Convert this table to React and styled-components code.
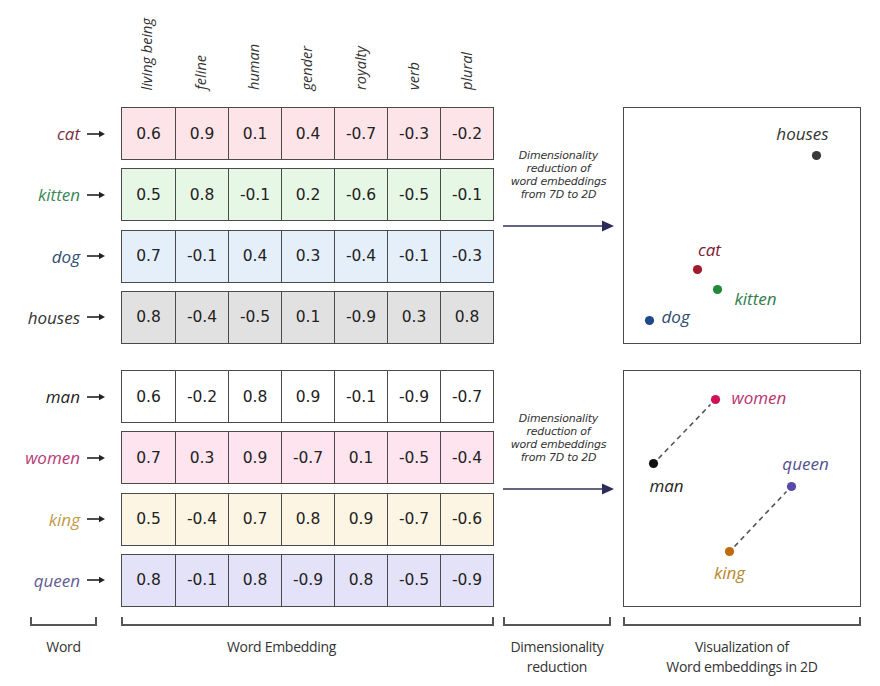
import React from "react";
import styled, { createGlobalStyle } from "styled-components";

const GlobalStyle = createGlobalStyle`
  html, body {
    margin: 0;
    padding: 0;
    background: #ffffff;
  }
  body {
    font-family: "Open Sans", "DejaVu Sans", sans-serif;
  }
`;

const COLS = "121px 373px 129px 238px";
const LINE = "#4a4a4a";

const features = ["living being", "feline", "human", "gender", "royalty", "verb", "plural"];

const groups = [
  {
    rows: [
      { word: "cat", color: "#7d2f45", bg: "#fde4e8", values: ["0.6", "0.9", "0.1", "0.4", "-0.7", "-0.3", "-0.2"] },
      { word: "kitten", color: "#3b8758", bg: "#e6f7e5", values: ["0.5", "0.8", "-0.1", "0.2", "-0.6", "-0.5", "-0.1"] },
      { word: "dog", color: "#2f4d72", bg: "#e4effa", values: ["0.7", "-0.1", "0.4", "0.3", "-0.4", "-0.1", "-0.3"] },
      { word: "houses", color: "#333333", bg: "#e1e1e1", values: ["0.8", "-0.4", "-0.5", "0.1", "-0.9", "0.3", "0.8"] },
    ],
    points: [
      { label: "houses", color: "#333333", dot: "#3a3a3a", x: 194, y: 49, tx: 180, ty: 33, anchor: "middle" },
      { label: "cat", color: "#7d2030", dot: "#a01b2b", x: 75, y: 163, tx: 87, ty: 149, anchor: "middle" },
      { label: "kitten", color: "#2f7d4c", dot: "#1f8a3a", x: 95, y: 183, tx: 112, ty: 198, anchor: "start" },
      { label: "dog", color: "#2d4a6e", dot: "#1f4a8a", x: 27, y: 214, tx: 39, ty: 216, anchor: "start" },
    ],
    links: [],
  },
  {
    rows: [
      { word: "man", color: "#1f1f1f", bg: "#ffffff", values: ["0.6", "-0.2", "0.8", "0.9", "-0.1", "-0.9", "-0.7"] },
      { word: "women", color: "#b63c77", bg: "#fde4ef", values: ["0.7", "0.3", "0.9", "-0.7", "0.1", "-0.5", "-0.4"] },
      { word: "king", color: "#c39a48", bg: "#fdf5e3", values: ["0.5", "-0.4", "0.7", "0.8", "0.9", "-0.7", "-0.6"] },
      { word: "queen", color: "#5f5d92", bg: "#e4e2f8", values: ["0.8", "-0.1", "0.8", "-0.9", "0.8", "-0.5", "-0.9"] },
    ],
    points: [
      { label: "women", color: "#b8336f", dot: "#d0105a", x: 93, y: 30, tx: 109, ty: 34, anchor: "start" },
      { label: "man", color: "#1f1f1f", dot: "#111111", x: 31, y: 94, tx: 44, ty: 122, anchor: "middle" },
      { label: "queen", color: "#55508e", dot: "#5a4aa8", x: 169, y: 117, tx: 183, ty: 100, anchor: "middle" },
      { label: "king", color: "#b8862e", dot: "#c06a10", x: 107, y: 182, tx: 107, ty: 209, anchor: "middle" },
    ],
    links: [
      [31, 94, 93, 30],
      [107, 182, 169, 117],
    ],
  },
];

const Page = styled.div`
  width: 880px;
  height: 686px;
  background: #ffffff;
  display: flex;
  flex-direction: column;
`;

const Header = styled.div`
  display: flex;
  height: 107px;
  flex: none;
`;

const HeaderSpacer = styled.div`
  width: 121px;
  flex: none;
`;

const HeaderCols = styled.div`
  width: 373px;
  display: grid;
  grid-template-columns: repeat(7, 1fr);
`;

const HeadCell = styled.div`
  display: flex;
  align-items: flex-end;
  justify-content: center;
  padding-bottom: 17px;
`;

const HeadText = styled.span`
  writing-mode: vertical-rl;
  transform: rotate(180deg);
  font-style: italic;
  font-size: 14.5px;
  line-height: 1;
  color: #333333;
  white-space: nowrap;
`;

const Section = styled.section`
  display: flex;
  height: 237px;
  flex: none;
  margin-top: ${(p) => p.$top}px;
`;

const Rows = styled.div`
  width: 494px;
  display: flex;
  flex-direction: column;
  justify-content: space-between;
`;

const Row = styled.div`
  display: flex;
  height: 53px;
`;

const WordLabel = styled.div`
  width: 121px;
  flex: none;
  box-sizing: border-box;
  padding-right: 16px;
  display: flex;
  align-items: center;
  justify-content: flex-end;
  gap: 7px;
  font-style: italic;
  font-size: 17px;
  color: ${(p) => p.$color};
`;

const Cells = styled.div`
  width: 373px;
  box-sizing: border-box;
  display: grid;
  grid-template-columns: repeat(7, 1fr);
  border: 1.5px solid ${LINE};
  background: ${(p) => p.$bg};
`;

const Cell = styled.div`
  display: flex;
  align-items: center;
  justify-content: center;
  font-family: "DejaVu Sans", sans-serif;
  font-size: 15.5px;
  color: #222222;
  & + & {
    border-left: 1.5px solid ${LINE};
  }
`;

const DimCol = styled.div`
  width: 129px;
  box-sizing: border-box;
  padding: 0 9px;
  display: grid;
  grid-template-rows: 1fr auto 1fr;
`;

const DimCaption = styled.div`
  align-self: end;
  margin-bottom: 18px;
  text-align: center;
  font-family: "DejaVu Sans", sans-serif;
  font-style: oblique;
  font-size: 11px;
  line-height: 12.9px;
  letter-spacing: -0.2px;
  color: #333333;
`;

const Plot = styled.div`
  width: 238px;
  height: 237px;
  box-sizing: border-box;
  border: 1.5px solid ${LINE};
  svg {
    display: block;
  }
`;

const Footer = styled.div`
  display: grid;
  grid-template-columns: ${COLS};
  margin-top: 10px;
`;

const FootCell = styled.div`
  display: flex;
  flex-direction: column;
  align-items: center;
  padding: ${(p) => p.$pad || "0"};
`;

const Bracket = styled.div`
  align-self: stretch;
  height: 9px;
  box-sizing: border-box;
  border: 2px solid #555555;
  border-top: none;
`;

const FootLabel = styled.div`
  margin-top: 11px;
  margin-right: ${(p) => p.$shift || 0}px;
  font-size: 14px;
  line-height: 20px;
  letter-spacing: -0.3px;
  text-align: center;
  color: #333333;
`;

function SmallArrow({ color }) {
  return (
    <svg width="18" height="8" viewBox="0 0 18 8">
      <line x1="0" y1="4" x2="13" y2="4" stroke={color} strokeWidth="1.6" />
      <polygon points="12,0.8 18,4 12,7.2" fill={color} />
    </svg>
  );
}

function BigArrow() {
  return (
    <svg width="111" height="12" viewBox="0 0 111 12">
      <line x1="0" y1="6" x2="102" y2="6" stroke="#33335a" strokeWidth="1.6" />
      <polygon points="99,0.5 111,6 99,11.5" fill="#2b2b5c" />
    </svg>
  );
}

function ScatterPlot({ points, links }) {
  return (
    <Plot>
      <svg width="235" height="234" viewBox="1.5 1.5 235 234">
        {links.map(([x1, y1, x2, y2], i) => (
          <line
            key={i}
            x1={x1 + 5}
            y1={y1 - 5}
            x2={x2 - 5}
            y2={y2 + 5}
            stroke="#555555"
            strokeWidth="1.6"
            strokeDasharray="5 4"
          />
        ))}
        {points.map((p) => (
          <g key={p.label}>
            <circle cx={p.x} cy={p.y} r="4.6" fill={p.dot} />
            <text
              x={p.tx}
              y={p.ty}
              textAnchor={p.anchor}
              fill={p.color}
              fontFamily='"Open Sans", sans-serif'
              fontStyle="italic"
              fontSize="17"
            >
              {p.label}
            </text>
          </g>
        ))}
      </svg>
    </Plot>
  );
}

function Group({ group, top }) {
  return (
    <Section $top={top}>
      <Rows>
        {group.rows.map((r) => (
          <Row key={r.word}>
            <WordLabel $color={r.color}>
              <span>{r.word}</span>
              <SmallArrow color="#222222" />
            </WordLabel>
            <Cells $bg={r.bg}>
              {r.values.map((v, i) => (
                <Cell key={i}>{v}</Cell>
              ))}
            </Cells>
          </Row>
        ))}
      </Rows>
      <DimCol>
        <DimCaption>
          Dimensionality
          <br />
          reduction of
          <br />
          word embeddings
          <br />
          from 7D to 2D
        </DimCaption>
        <BigArrow />
        <div />
      </DimCol>
      <ScatterPlot points={group.points} links={group.links} />
    </Section>
  );
}

export default function App() {
  return (
    <>
      <GlobalStyle />
      <Page>
        <Header>
          <HeaderSpacer />
          <HeaderCols>
            {features.map((f) => (
              <HeadCell key={f}>
                <HeadText>{f}</HeadText>
              </HeadCell>
            ))}
          </HeaderCols>
        </Header>
        <Group group={groups[0]} top={0} />
        <Group group={groups[1]} top={26} />
        <Footer>
          <FootCell $pad="0 24px 0 30px">
            <Bracket />
            <FootLabel>Word</FootLabel>
          </FootCell>
          <FootCell>
            <Bracket />
            <FootLabel $shift={52}>Word Embedding</FootLabel>
          </FootCell>
          <FootCell $pad="0 12px 0 9px">
            <Bracket />
            <FootLabel>
              Dimensionality
              <br />
              reduction
            </FootLabel>
          </FootCell>
          <FootCell>
            <Bracket />
            <FootLabel>
              Visualization of
              <br />
              Word embeddings in 2D
            </FootLabel>
          </FootCell>
        </Footer>
      </Page>
    </>
  );
}
